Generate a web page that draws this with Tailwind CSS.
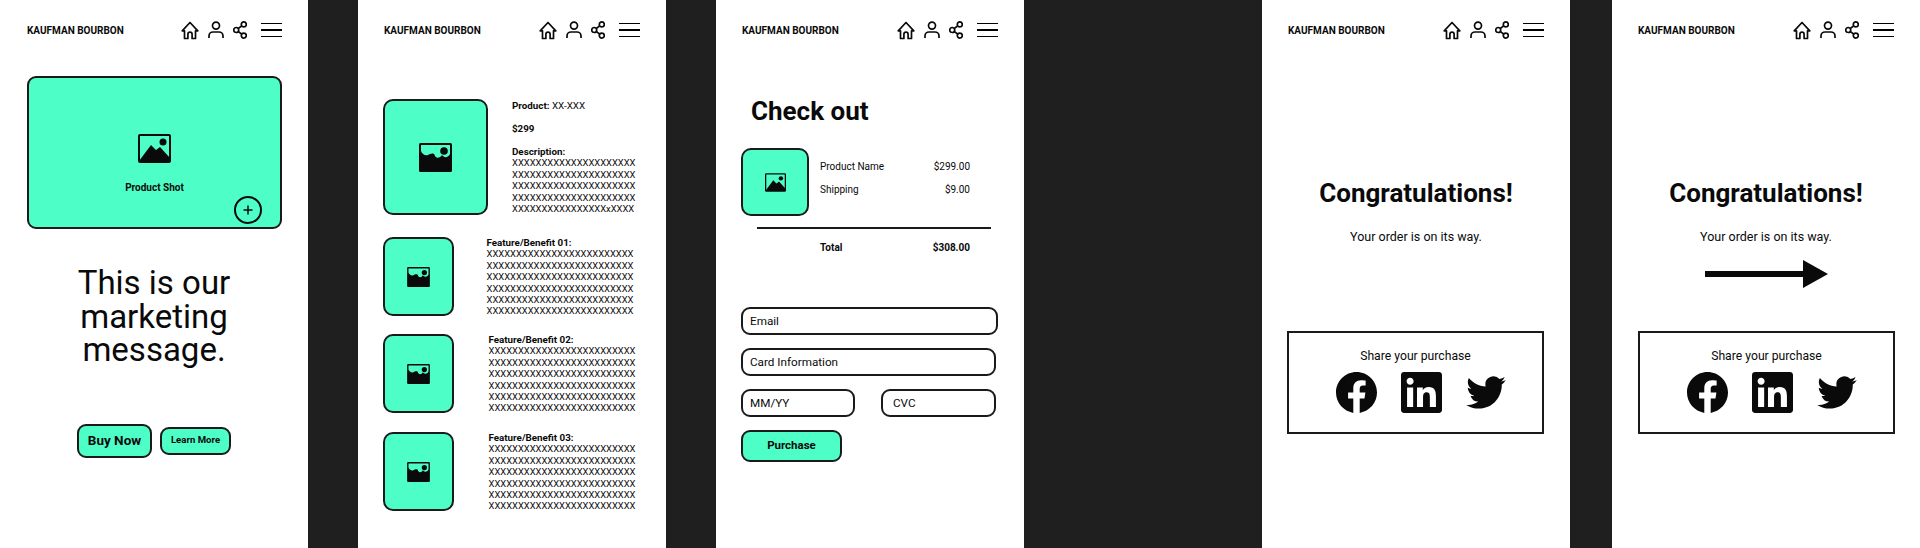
<!DOCTYPE html>
<html lang="en">
<head>
  <meta charset="UTF-8">
  <meta name="viewport" content="width=device-width, initial-scale=1.0">
  <title>Kaufman Bourbon wireframes</title>
  <script src="https://cdn.jsdelivr.net/npm/@tailwindcss/browser@4"></script>
</head>
<body class="bg-[#1f1f1f] font-['Roboto',sans-serif] text-[#0a0a0a] overflow-hidden">
  <!-- shared icons -->
  <svg class="hidden">
    <symbol id="nav-home" viewBox="0 0 18 19"><path d="M1.2 9.8 9 1.5l7.8 8.3h-2.3v7.7h-3.4v-4.3a2.1 2.1 0 0 0-4.2 0v4.3H3.5V9.8z" fill="none" stroke="currentColor" stroke-width="1.7" stroke-linejoin="round"/></symbol>
    <symbol id="nav-user" viewBox="0 0 16 18"><circle cx="8" cy="4.6" r="3.5" fill="none" stroke="currentColor" stroke-width="1.7"/><path d="M1 17v-2a4 4 0 0 1 4-4h6a4 4 0 0 1 4 4v2" fill="none" stroke="currentColor" stroke-width="1.7"/></symbol>
    <symbol id="nav-share" viewBox="0 0 14 18"><g fill="none" stroke="currentColor" stroke-width="1.7"><circle cx="10.8" cy="3.4" r="2.5"/><circle cx="3.2" cy="9" r="2.5"/><circle cx="10.8" cy="14.6" r="2.5"/><path d="m5.2 7.5 3.6-2.6M5.2 10.5l3.6 2.6"/></g></symbol>
    <symbol id="pic-peaks" viewBox="0 0 33 29"><rect x="1" y="1" width="31" height="27" rx="1" fill="none" stroke="currentColor" stroke-width="2"/><path d="M1 27 13 11l5 5 4-3 10 11v4H1z" fill="currentColor"/><circle cx="25" cy="8" r="3.5" fill="currentColor"/></symbol>
    <symbol id="pic-waves" viewBox="0 0 33 29"><rect x="0" y="0" width="33" height="29" rx="1.5" fill="currentColor"/><path d="M2 2h29v9c-2 4-6 4-8 1-2 3-5 4-7 1-1-4-5-2-7-1-3 1-6-1-7-4z" fill="#4dffc7"/><circle cx="25" cy="8" r="3.8" fill="currentColor"/></symbol>
    <symbol id="logo-fb" viewBox="0 0 24 24"><path fill="currentColor" d="M24 12.073c0-6.627-5.373-12-12-12s-12 5.373-12 12c0 5.99 4.388 10.954 10.125 11.854v-8.385H7.078v-3.47h3.047V9.43c0-3.007 1.792-4.669 4.533-4.669 1.312 0 2.686.235 2.686.235v2.953H15.83c-1.491 0-1.956.925-1.956 1.874v2.25h3.328l-.532 3.47h-2.796v8.385C19.612 23.027 24 18.062 24 12.073z"/></symbol>
    <symbol id="logo-in" viewBox="0 0 24 24"><path fill="currentColor" d="M20.447 20.452h-3.554v-5.569c0-1.328-.027-3.037-1.852-3.037-1.853 0-2.136 1.445-2.136 2.939v5.667H9.351V9h3.414v1.561h.046c.477-.9 1.637-1.85 3.37-1.85 3.601 0 4.267 2.37 4.267 5.455v6.286zM5.337 7.433c-1.144 0-2.063-.926-2.063-2.065 0-1.138.92-2.063 2.063-2.063 1.14 0 2.064.925 2.064 2.063 0 1.139-.925 2.065-2.064 2.065zm1.782 13.019H3.555V9h3.564v11.452zM22.225 0H1.771C.792 0 0 .774 0 1.729v20.542C0 23.227.792 24 1.771 24h20.451C23.2 24 24 23.227 24 22.271V1.729C24 .774 23.2 0 22.222 0h.003z"/></symbol>
    <symbol id="logo-tw" viewBox="0 0 24 20"><path fill="currentColor" transform="translate(0 -2)" d="M23.953 4.57a10 10 0 01-2.825.775 4.958 4.958 0 002.163-2.723c-.951.555-2.005.959-3.127 1.184a4.92 4.92 0 00-8.384 4.482C7.69 8.095 4.067 6.13 1.64 3.162a4.822 4.822 0 00-.666 2.475c0 1.71.87 3.213 2.188 4.096a4.904 4.904 0 01-2.228-.616v.06a4.923 4.923 0 003.946 4.827 4.996 4.996 0 01-2.212.085 4.936 4.936 0 004.604 3.417 9.867 9.867 0 01-6.102 2.105c-.39 0-.779-.023-1.17-.067a13.995 13.995 0 007.557 2.209c9.053 0 13.998-7.496 13.998-13.985 0-.21 0-.42-.015-.63A9.935 9.935 0 0024 4.59z"/></symbol>
  </svg>

  <div class="flex h-[548px] w-[1920px]">

    <!-- landing -->
    <section class="w-[308px] h-[548px] bg-white shrink-0">
      <header class="h-[60px] flex items-center pl-[27px] pr-[26px]">
        <span class="text-[10px] font-bold mt-[1px]">KAUFMAN BOURBON</span>
        <nav class="ml-auto flex items-center">
          <svg class="w-[18px] h-[19px]"><use href="#nav-home"/></svg>
          <svg class="w-[16px] h-[18px] ml-[9px]"><use href="#nav-user"/></svg>
          <svg class="w-[14px] h-[18px] ml-[9px]"><use href="#nav-share"/></svg>
          <div class="w-[21px] ml-[14px] flex flex-col gap-[5px]"><i class="block h-[1.5px] bg-black"></i><i class="block h-[1.5px] bg-black"></i><i class="block h-[1.5px] bg-black"></i></div>
        </nav>
      </header>
      <div class="relative ml-[27px] mt-[16px] w-[255px] h-[153px] bg-[#4dffc7] border-2 border-[#1a1a1a] rounded-[9px] flex flex-col items-center pt-[56px]">
        <svg class="w-[33px] h-[29px]"><use href="#pic-peaks"/></svg>
        <p class="mt-[18px] text-[10px] leading-[14px] font-bold">Product Shot</p>
        <div class="absolute right-[18px] bottom-[3px] w-[28px] h-[28px] border-2 border-[#0a0a0a] rounded-full flex items-center justify-center">
          <svg class="w-[10px] h-[10px]" viewBox="0 0 10 10"><path d="M5 .5v9M.5 5h9" stroke="currentColor" stroke-width="1.5"/></svg>
        </div>
      </div>
      <h1 class="mt-[37px] w-[308px] text-center text-[33px] leading-[33.5px]">This is our<br>marketing<br>message.</h1>
      <div class="mt-[57px] ml-[77px] flex items-center gap-[8px]">
        <button class="w-[75px] h-[34px] bg-[#4dffc7] border-2 border-[#1a1a1a] rounded-[9px] text-[13.5px] font-bold">Buy Now</button>
        <button class="w-[71px] h-[28px] bg-[#4dffc7] border-2 border-[#1a1a1a] rounded-[9px] text-[9.6px] font-bold">Learn More</button>
      </div>
    </section>

    <!-- product detail -->
    <section class="w-[308px] h-[548px] bg-white shrink-0 ml-[50px]">
      <header class="h-[60px] flex items-center pl-[26px] pr-[26px]">
        <span class="text-[10px] font-bold mt-[1px]">KAUFMAN BOURBON</span>
        <nav class="ml-auto flex items-center">
          <svg class="w-[18px] h-[19px]"><use href="#nav-home"/></svg>
          <svg class="w-[16px] h-[18px] ml-[9px]"><use href="#nav-user"/></svg>
          <svg class="w-[14px] h-[18px] ml-[9px]"><use href="#nav-share"/></svg>
          <div class="w-[21px] ml-[14px] flex flex-col gap-[5px]"><i class="block h-[1.5px] bg-black"></i><i class="block h-[1.5px] bg-black"></i><i class="block h-[1.5px] bg-black"></i></div>
        </nav>
      </header>
      <div class="mt-[39px] ml-[25px] flex items-start">
        <div class="w-[105px] h-[116px] shrink-0 bg-[#4dffc7] border-2 border-[#1a1a1a] rounded-[10px] flex items-center justify-center">
          <svg class="w-[33px] h-[29px]"><use href="#pic-waves"/></svg>
        </div>
        <div class="ml-[24px] pt-[1px] text-[9.8px] leading-[11.4px] whitespace-nowrap">
          <p><b class="font-bold">Product:</b> XX-XXX</p>
          <p class="mt-[11.6px] font-bold">$299</p>
          <p class="mt-[11.6px] font-bold">Description:</p>
          <p class="text-[9.4px]">XXXXXXXXXXXXXXXXXXXXX</p>
          <p class="text-[9.4px]">XXXXXXXXXXXXXXXXXXXXX</p>
          <p class="text-[9.4px]">XXXXXXXXXXXXXXXXXXXXX</p>
          <p class="text-[9.4px]">XXXXXXXXXXXXXXXXXXXXX</p>
          <p class="text-[9.4px]">XXXXXXXXXXXXXXXXxXXXX</p>
        </div>
      </div>
      <div class="mt-[22px] ml-[25px] h-[79px] flex items-start">
        <div class="w-[71px] h-[79px] shrink-0 bg-[#4dffc7] border-2 border-[#1a1a1a] rounded-[10px] flex items-center justify-center">
          <svg class="w-[23px] h-[20px]"><use href="#pic-waves"/></svg>
        </div>
        <div class="ml-[32.5px] text-[9.8px] leading-[11.4px] whitespace-nowrap">
          <p class="font-bold">Feature/Benefit 01:</p>
          <p class="text-[9.4px]">XXXXXXXXXXXXXXXXXXXXXXXXX</p>
          <p class="text-[9.4px]">XXXXXXXXXXXXXXXXXXXXXXXXX</p>
          <p class="text-[9.4px]">XXXXXXXXXXXXXXXXXXXXXXXXX</p>
          <p class="text-[9.4px]">XXXXXXXXXXXXXXXXXXXXXXXXX</p>
          <p class="text-[9.4px]">XXXXXXXXXXXXXXXXXXXXXXXXX</p>
          <p class="text-[9.4px]">XXXXXXXXXXXXXXXXXXXXXXXXX</p>
        </div>
      </div>
      <div class="mt-[18px] ml-[25px] h-[79px] flex items-start">
        <div class="w-[71px] h-[79px] shrink-0 bg-[#4dffc7] border-2 border-[#1a1a1a] rounded-[10px] flex items-center justify-center">
          <svg class="w-[23px] h-[20px]"><use href="#pic-waves"/></svg>
        </div>
        <div class="ml-[34.5px] text-[9.8px] leading-[11.4px] whitespace-nowrap">
          <p class="font-bold">Feature/Benefit 02:</p>
          <p class="text-[9.4px]">XXXXXXXXXXXXXXXXXXXXXXXXX</p>
          <p class="text-[9.4px]">XXXXXXXXXXXXXXXXXXXXXXXXX</p>
          <p class="text-[9.4px]">XXXXXXXXXXXXXXXXXXXXXXXXX</p>
          <p class="text-[9.4px]">XXXXXXXXXXXXXXXXXXXXXXXXX</p>
          <p class="text-[9.4px]">XXXXXXXXXXXXXXXXXXXXXXXXX</p>
          <p class="text-[9.4px]">XXXXXXXXXXXXXXXXXXXXXXXXX</p>
        </div>
      </div>
      <div class="mt-[19px] ml-[25px] h-[79px] flex items-start">
        <div class="w-[71px] h-[79px] shrink-0 bg-[#4dffc7] border-2 border-[#1a1a1a] rounded-[10px] flex items-center justify-center">
          <svg class="w-[23px] h-[20px]"><use href="#pic-waves"/></svg>
        </div>
        <div class="ml-[34.5px] text-[9.8px] leading-[11.4px] whitespace-nowrap">
          <p class="font-bold">Feature/Benefit 03:</p>
          <p class="text-[9.4px]">XXXXXXXXXXXXXXXXXXXXXXXXX</p>
          <p class="text-[9.4px]">XXXXXXXXXXXXXXXXXXXXXXXXX</p>
          <p class="text-[9.4px]">XXXXXXXXXXXXXXXXXXXXXXXXX</p>
          <p class="text-[9.4px]">XXXXXXXXXXXXXXXXXXXXXXXXX</p>
          <p class="text-[9.4px]">XXXXXXXXXXXXXXXXXXXXXXXXX</p>
          <p class="text-[9.4px]">XXXXXXXXXXXXXXXXXXXXXXXXX</p>
        </div>
      </div>
    </section>

    <!-- check out -->
    <section class="w-[308px] h-[548px] bg-white shrink-0 ml-[50px]">
      <header class="h-[60px] flex items-center pl-[26px] pr-[26px]">
        <span class="text-[10px] font-bold mt-[1px]">KAUFMAN BOURBON</span>
        <nav class="ml-auto flex items-center">
          <svg class="w-[18px] h-[19px]"><use href="#nav-home"/></svg>
          <svg class="w-[16px] h-[18px] ml-[9px]"><use href="#nav-user"/></svg>
          <svg class="w-[14px] h-[18px] ml-[9px]"><use href="#nav-share"/></svg>
          <div class="w-[21px] ml-[14px] flex flex-col gap-[5px]"><i class="block h-[1.5px] bg-black"></i><i class="block h-[1.5px] bg-black"></i><i class="block h-[1.5px] bg-black"></i></div>
        </nav>
      </header>
      <h2 class="mt-[33px] ml-[35px] text-[26px] leading-[36px] font-bold">Check out</h2>
      <div class="mt-[19px] ml-[25px] flex items-start">
        <div class="w-[68px] h-[68px] shrink-0 bg-[#4dffc7] border-2 border-[#1a1a1a] rounded-[10px] flex items-center justify-center">
          <svg class="w-[21px] h-[19px]"><use href="#pic-peaks"/></svg>
        </div>
        <div class="ml-[11px] w-[150px] pt-[12px] text-[10px] leading-[14px]">
          <p class="flex justify-between"><span>Product Name</span><span>$299.00</span></p>
          <p class="flex justify-between mt-[8.5px]"><span>Shipping</span><span>$9.00</span></p>
        </div>
      </div>
      <div class="mt-[11px] ml-[41px] w-[234px] h-[2px] bg-[#1a1a1a]"></div>
      <p class="mt-[12px] ml-[104px] w-[150px] flex justify-between text-[10px] leading-[14px] font-bold"><span>Total</span><span>$308.00</span></p>
      <form class="mt-[52px] ml-[25px]">
        <div class="w-[257px] h-[28px] border-2 border-[#1a1a1a] rounded-[9px] pl-[7px] text-[11.7px] leading-[24px]">Email</div>
        <div class="mt-[13px] w-[255px] h-[28px] border-2 border-[#1a1a1a] rounded-[9px] pl-[7px] text-[11.7px] leading-[24px]">Card Information</div>
        <div class="mt-[13px] flex gap-[26px]">
          <div class="w-[114px] h-[28px] border-2 border-[#1a1a1a] rounded-[9px] pl-[7px] text-[11.7px] leading-[24px]">MM/YY</div>
          <div class="w-[115px] h-[28px] border-2 border-[#1a1a1a] rounded-[9px] pl-[10px] text-[11.7px] leading-[24px]">CVC</div>
        </div>
        <button type="button" class="block mt-[13px] w-[101px] h-[32px] bg-[#4dffc7] border-2 border-[#1a1a1a] rounded-[9px] text-[11.5px] font-bold">Purchase</button>
      </form>
    </section>

    <!-- confirmation -->
    <section class="w-[308px] h-[548px] bg-white shrink-0 ml-[238px]">
      <header class="h-[60px] flex items-center pl-[26px] pr-[26px]">
        <span class="text-[10px] font-bold mt-[1px]">KAUFMAN BOURBON</span>
        <nav class="ml-auto flex items-center">
          <svg class="w-[18px] h-[19px]"><use href="#nav-home"/></svg>
          <svg class="w-[16px] h-[18px] ml-[9px]"><use href="#nav-user"/></svg>
          <svg class="w-[14px] h-[18px] ml-[9px]"><use href="#nav-share"/></svg>
          <div class="w-[21px] ml-[14px] flex flex-col gap-[5px]"><i class="block h-[1.5px] bg-black"></i><i class="block h-[1.5px] bg-black"></i><i class="block h-[1.5px] bg-black"></i></div>
        </nav>
      </header>
      <h2 class="mt-[115px] text-center text-[26px] leading-[36px] font-bold">Congratulations!</h2>
      <p class="mt-[18px] text-center text-[12.5px] leading-[16px]">Your order is on its way.</p>
      <div class="mt-[86px] ml-[25px] w-[257px] h-[103px] border-2 border-[#1a1a1a] flex flex-col items-center pt-[15px]">
        <p class="text-[12.2px] leading-[16px]">Share your purchase</p>
        <div class="mt-[8px] pl-[10px] flex items-center gap-[24px]">
          <svg class="w-[41px] h-[41px]"><use href="#logo-fb"/></svg>
          <svg class="w-[41px] h-[41px]"><use href="#logo-in"/></svg>
          <svg class="w-[40px] h-[33px]"><use href="#logo-tw"/></svg>
        </div>
      </div>
    </section>

    <!-- confirmation with arrow -->
    <section class="w-[308px] h-[548px] bg-white shrink-0 ml-[42px]">
      <header class="h-[60px] flex items-center pl-[26px] pr-[26px]">
        <span class="text-[10px] font-bold mt-[1px]">KAUFMAN BOURBON</span>
        <nav class="ml-auto flex items-center">
          <svg class="w-[18px] h-[19px]"><use href="#nav-home"/></svg>
          <svg class="w-[16px] h-[18px] ml-[9px]"><use href="#nav-user"/></svg>
          <svg class="w-[14px] h-[18px] ml-[9px]"><use href="#nav-share"/></svg>
          <div class="w-[21px] ml-[14px] flex flex-col gap-[5px]"><i class="block h-[1.5px] bg-black"></i><i class="block h-[1.5px] bg-black"></i><i class="block h-[1.5px] bg-black"></i></div>
        </nav>
      </header>
      <h2 class="mt-[115px] text-center text-[26px] leading-[36px] font-bold">Congratulations!</h2>
      <p class="mt-[18px] text-center text-[12.5px] leading-[16px]">Your order is on its way.</p>
      <svg class="block mt-[15px] ml-[93px] w-[123px] h-[28px]" viewBox="0 0 123 28"><path d="M0 11h98V0l25 14-25 14V17H0z" fill="currentColor"/></svg>
      <div class="mt-[43px] ml-[26px] w-[257px] h-[103px] border-2 border-[#1a1a1a] flex flex-col items-center pt-[15px]">
        <p class="text-[12.2px] leading-[16px]">Share your purchase</p>
        <div class="mt-[8px] pl-[10px] flex items-center gap-[24px]">
          <svg class="w-[41px] h-[41px]"><use href="#logo-fb"/></svg>
          <svg class="w-[41px] h-[41px]"><use href="#logo-in"/></svg>
          <svg class="w-[40px] h-[33px]"><use href="#logo-tw"/></svg>
        </div>
      </div>
    </section>

  </div>
</body>
</html>
